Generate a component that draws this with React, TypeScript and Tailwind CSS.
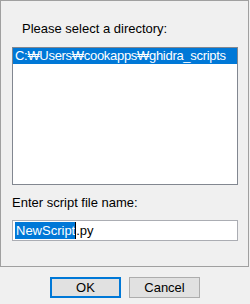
import { useState } from 'react'

export default function App() {
  const [selected] = useState(0)
  const dirs = ['C:₩Users₩cookapps₩ghidra_scripts']

  return (
    <div
      className="w-[250px] h-[304px] bg-[#f0f0f0] text-[13px] text-black overflow-hidden"
      style={{ fontFamily: '"Liberation Sans", "Noto Sans CJK KR", sans-serif' }}
    >
      {/* Main panel */}
      <div className="w-[249px] h-[267px] border border-[#a0a0a0] pl-[11px] pt-[20px] flex flex-col">
        <div className="pl-[10px] leading-[15px] h-[15px]">Please select a directory:</div>

        <div className="mt-[11px] w-[226px] h-[138px] border border-[#828790] bg-white">
          {dirs.map((d, i) => (
            <div
              key={d}
              className={
                i === selected
                  ? 'h-[16px] leading-[16px] pl-[2px] bg-[#0078d7] text-white whitespace-nowrap tracking-[-0.3px]'
                  : 'h-[16px] leading-[16px] pl-[2px] whitespace-nowrap tracking-[-0.3px]'
              }
            >
              {d}
            </div>
          ))}
        </div>

        <div className="mt-[10px] leading-[15px] h-[15px]">Enter script file name:</div>

        {/* File name input */}
        <div className="mt-[10px] w-[226px] h-[21px] border border-[#abadb3] bg-white flex items-center pl-[2px]">
          <span className="bg-[#0078d7] text-white h-[17px] leading-[17px] pl-[1px] whitespace-nowrap">NewScript</span>
          <span className="w-[1px] h-[17px] bg-black" />
          <span className="leading-[17px] whitespace-nowrap">.py</span>
        </div>
      </div>

      {/* Buttons */}
      <div className="mt-[10px] flex justify-center gap-[8px]">
        <button className="w-[71px] h-[21px] border-2 border-[#0078d7] bg-[#e1e1e1] flex items-center justify-center leading-[15px] pb-[1px]">
          OK
        </button>
        <button className="w-[71px] h-[21px] border border-[#adadad] bg-[#e1e1e1] flex items-center justify-center leading-[15px] pb-[1px]">
          Cancel
        </button>
      </div>
    </div>
  )
}
